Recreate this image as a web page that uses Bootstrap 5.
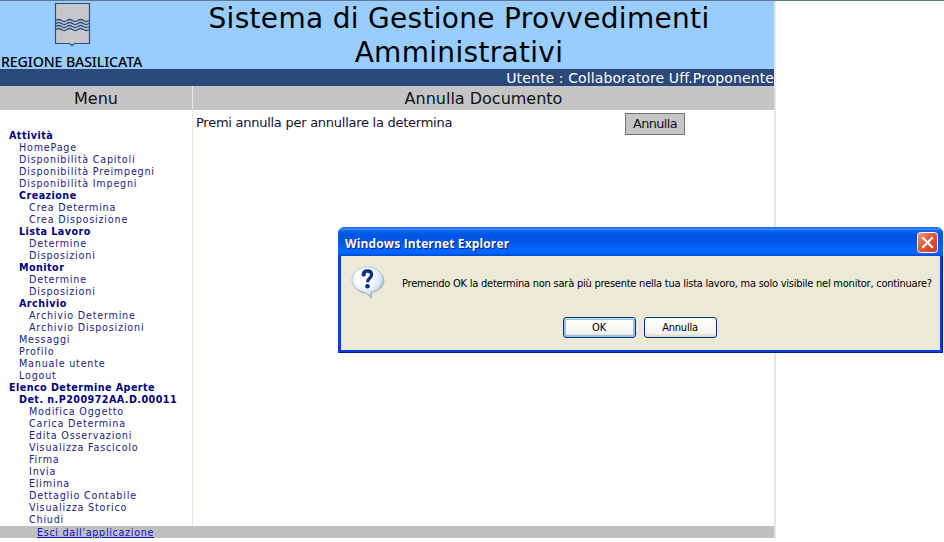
<!DOCTYPE html>
<html lang="it">
<head>
<meta charset="utf-8">
<title>Sistema di Gestione Provvedimenti Amministrativi</title>
<link href="https://cdn.jsdelivr.net/npm/bootstrap@5.3.0/dist/css/bootstrap.min.css" rel="stylesheet">
<style>
body{font-family:"DejaVu Sans",Verdana,sans-serif;background:#fff;color:#000;height:542px;overflow:hidden;border-top:1px solid #65778c}
.app{width:776px;border-right:2px solid #e8e5df;height:538px}
.top-band{background:#9cf;height:68px}
.brand{width:192px}
.crest{display:block;margin:2px 0 0 54px}
.region{font:500 14.2px/18px "Noto Sans",sans-serif;white-space:nowrap;margin:6px 0 0 1px;letter-spacing:-.13px}
.app-title{font-size:28px;line-height:34px;font-weight:400;margin:0;padding:1px 48px 0 0;letter-spacing:.31px}
.user-band{background:#2a4878;height:17px;line-height:18px;font-size:14px;color:#fff;letter-spacing:.11px}
.heads{background:#c5c5c5;height:24px;font-size:16px;line-height:25px;color:#111}
.side{width:193px;border-right:1px solid #e9e9d8}
.work{height:416px}
.side-list{font-size:9.6px;line-height:12px;padding-top:20px;color:#1c1c86;letter-spacing:.8px}
.side-list a{display:block;color:inherit;text-decoration:none;white-space:nowrap}
.side-list .l0{padding-left:9px}.side-list .l1{padding-left:19px}.side-list .l2{padding-left:29px}
.side-list .head{font-weight:700;color:#00007c;letter-spacing:.45px}
.prompt{font-size:13px;line-height:20px;color:#200c36;padding:3px 0 0 3px;width:432px;letter-spacing:-.26px}
.btn-flat{background:#c5c5c5;border:1px solid #74746f;border-radius:0;font-size:12.8px;line-height:20px;width:60px;height:22px;padding:0;margin-top:3px;color:#180c24;letter-spacing:-.6px}
.exit{background:#c0c0c0;height:12px;line-height:13px;font-size:9.6px;padding-left:37px;letter-spacing:.68px}
.exit a{color:#1010c8}
.dlg{position:absolute;left:338px;top:227px;width:605px;height:126px;border-radius:7px 7px 0 0;background:#0841d8;padding:0 3px 3px;box-shadow:inset 1px 0 #0b3fd0,inset -1px -1px #001c90}
.dlg-title{height:29px;margin:0 -3px;padding:0 5px 0 7px;border-radius:7px 7px 0 0;background:linear-gradient(#1660e2 0,#3b91ff 2px,#0964f3 4px,#0054e3 8px,#0055e5 14px,#0266ff 23px,#0266ff 26px,#0048ce 29px);font:bold 12px/14px "Open Sans",sans-serif;letter-spacing:.14px;color:#fff;text-shadow:1px 1px #0a1883}
.close-x{width:21px;height:21px;margin-top:2px}
.dlg-body{background:#ece9d8;height:94px;font-family:"DejaVu Sans Condensed","DejaVu Sans",sans-serif;font-stretch:condensed;font-size:11px}
.bubble{margin:10px 0 0 10px}
.msg{margin:21px 0 0 17px;line-height:14px;white-space:nowrap;letter-spacing:-.235px}
.choices{padding:17px 2px 0 0}
.xp{width:73px;height:21px;border:1px solid #003c74;border-radius:3px;background:linear-gradient(#fff,#f4f3ee 80%,#d9d2c4);font-size:11px;line-height:20px;padding:0;color:#000;letter-spacing:-.25px}
.xp.def{box-shadow:inset 0 1px #cee7ff,inset 0 0 0 2px #9dbcec}
</style>
<script src="https://cdn.jsdelivr.net/npm/bootstrap@5.3.0/dist/js/bootstrap.bundle.min.js"></script>
</head>
<body>
<div class="app">
  <header class="top-band d-flex">
    <div class="brand">
      <svg class="crest" width="37" height="44" viewBox="0 0 37 44"><path d="M1.500.5h34v40H22q-3 0-4 2-1-2-4-2H1.500z" fill="#c5c7cb" stroke="#2c4d83" stroke-width="1.200"/><path d="M2 17.500q2.700-2 5.500 0t5.500 0 5.500 0 5.500 0 5.500 0 5.500 0M2 20.500q2.700-2 5.500 0t5.500 0 5.500 0 5.500 0 5.500 0 5.500 0M2 23.500q2.700-2 5.500 0t5.500 0 5.500 0 5.500 0 5.500 0 5.500 0M2 26.500q2.700-2 5.500 0t5.500 0 5.500 0 5.500 0 5.500 0 5.500 0" fill="none" stroke="#2c4d83" stroke-width="1.400"/></svg>
      <div class="region">REGIONE BASILICATA</div>
    </div>
    <h1 class="app-title flex-grow-1 text-center">Sistema di Gestione Provvedimenti<br>Amministrativi</h1>
  </header>
  <div class="user-band text-end"><span>Utente : Collaboratore Uff.Proponente</span></div>
  <div class="heads d-flex text-center"><div class="side"><span>Menu</span></div><div class="flex-grow-1"><span>Annulla Documento</span></div></div>
  <div class="work d-flex">
    <nav class="side side-list">
      <a class="l0 head">Attività</a><a class="l1">HomePage</a><a class="l1">Disponibilità Capitoli</a><a class="l1">Disponibilità Preimpegni</a><a class="l1">Disponibilità Impegni</a>
      <a class="l1 head">Creazione</a><a class="l2">Crea Determina</a><a class="l2">Crea Disposizione</a>
      <a class="l1 head">Lista Lavoro</a><a class="l2">Determine</a><a class="l2">Disposizioni</a>
      <a class="l1 head">Monitor</a><a class="l2">Determine</a><a class="l2">Disposizioni</a>
      <a class="l1 head">Archivio</a><a class="l2">Archivio Determine</a><a class="l2">Archivio Disposizioni</a>
      <a class="l1">Messaggi</a><a class="l1">Profilo</a><a class="l1">Manuale utente</a><a class="l1">Logout</a>
      <a class="l0 head">Elenco Determine Aperte</a><a class="l1 head">Det. n.P200972AA.D.00011</a>
      <a class="l2">Modifica Oggetto</a><a class="l2">Carica Determina</a><a class="l2">Edita Osservazioni</a><a class="l2">Visualizza Fascicolo</a><a class="l2">Firma</a><a class="l2">Invia</a><a class="l2">Elimina</a><a class="l2">Dettaglio Contabile</a><a class="l2">Visualizza Storico</a><a class="l2">Chiudi</a>
    </nav>
    <main class="d-flex align-items-start">
      <div class="prompt">Premi annulla per annullare la determina</div>
      <button class="btn btn-flat">Annulla</button>
    </main>
  </div>
  <footer class="exit"><a href="#">Esci dall'applicazione</a></footer>
</div>

<div class="dlg" role="dialog">
  <div class="dlg-title d-flex align-items-center justify-content-between"><span class="pt-1">Windows Internet Explorer</span>
    <svg class="close-x" viewBox="0 0 21 21"><defs><linearGradient id="red" x2="1" y2="1"><stop stop-color="#f09a80"/><stop offset=".45" stop-color="#e2573a"/><stop offset="1" stop-color="#c53c18"/></linearGradient></defs><rect x=".5" y=".5" width="20" height="20" rx="3" fill="url(#red)" stroke="#fff"/><path d="M6 6l9 9M15 6l-9 9" stroke="#fff" stroke-width="2.2" stroke-linecap="square"/></svg>
  </div>
  <div class="dlg-body">
    <div class="d-flex">
      <svg class="bubble" width="34" height="34" viewBox="0 0 34 34"><defs><radialGradient id="bub" cx=".42" cy=".35" r=".68"><stop offset=".4" stop-color="#fff"/><stop offset=".75" stop-color="#d3e3f6"/><stop offset="1" stop-color="#7fa3d2"/></radialGradient></defs><path d="M17.500 2C9 2 2 8 2 15.500c0 7 6 12 14 12.500l5 5v-6C28 25 33.500 21 33.500 15 33.500 8 26 2 17.500 2z" fill="#aaa796" opacity=".6"/><path d="M16.500 1C7.500 1 1 7 1 14c0 7 6 11.500 13.500 12.300l5.800 5.500v-6C27.500 24.500 32.300 20 32.300 14 32.300 7 25.500 1 16.500 1z" fill="url(#bub)" stroke="#9ab5d8" stroke-width=".7"/><path d="M12.300 9.300C12.300 6 14 5 16.300 5c2.600 0 4.300 1.400 4.300 3.800 0 3.600-4.100 3.500-4.100 7.400" fill="none" stroke="#0c3085" stroke-width="3.300"/><circle cx="12.700" cy="8.600" r="2.100" fill="#0c3085"/><circle cx="16.500" cy="20.300" r="2.300" fill="#0c3085"/></svg>
      <div class="msg">Premendo OK la determina non sarà più presente nella tua lista lavoro, ma solo visibile nel monitor, continuare?</div>
    </div>
    <div class="choices d-flex justify-content-center gap-2"><button class="btn xp def">OK</button><button class="btn xp">Annulla</button></div>
  </div>
</div>
</body>
</html>
